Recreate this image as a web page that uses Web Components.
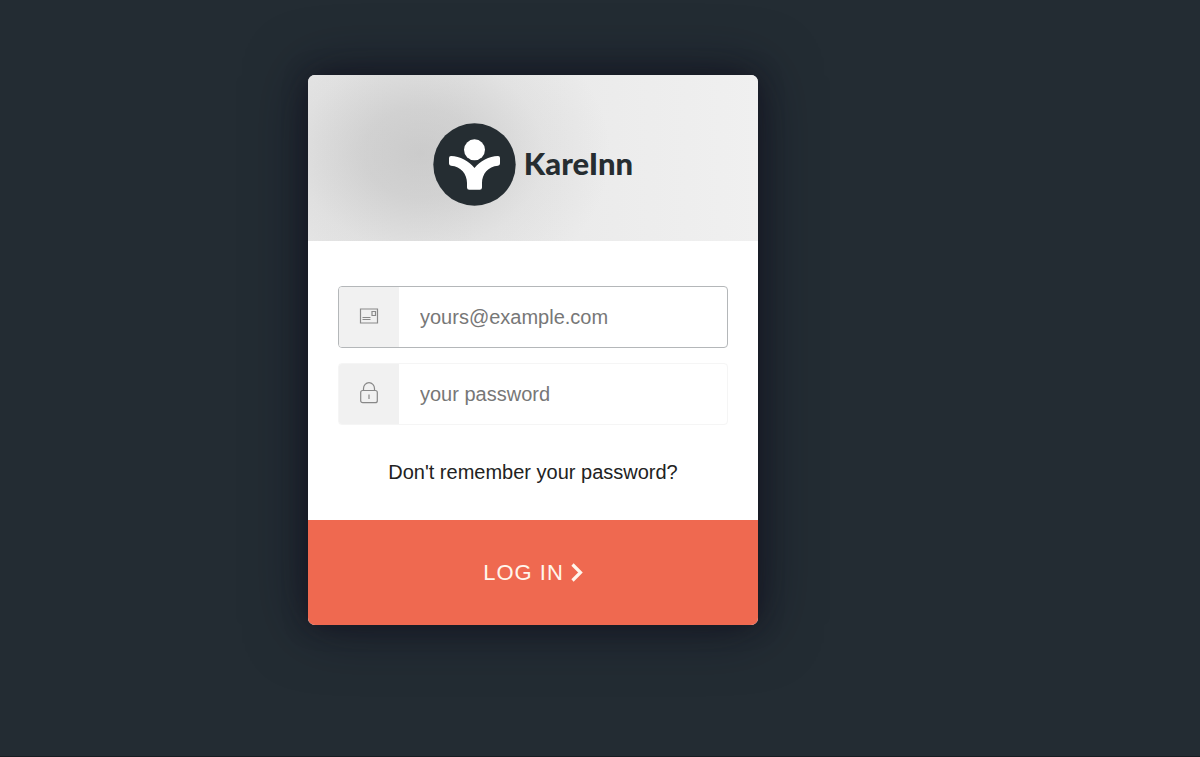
<!DOCTYPE html>
<html lang="en">
<head>
<meta charset="utf-8">
<meta name="viewport" content="width=device-width, initial-scale=1">
<title>KareInn – Log in</title>
<style>
  html { height: 100%; background: #232c33; }
  body { margin: 0; min-height: 100%; box-sizing: border-box; border-bottom: 1px solid #171d22; font-family: "Liberation Sans", Arial, sans-serif; font-size: 20px; color: #222; display: grid; }
</style>
</head>
<body>
<login-page>
  <login-card>
    <brand-header slot="header">KareInn</brand-header>
    <login-field type="email" name="email" placeholder="yours@example.com" label="Email" active>
      <svg width="20" height="16" viewBox="0 0 20 16" fill="none" stroke="#8a8a8a" stroke-width="1.2" aria-hidden="true"><path d="M1.500 1h17v14h-17zM13 3.500h3.500v4H13zM3.500 9.500h8M3.500 11.500h8"/></svg>
    </login-field>
    <login-field type="password" name="password" placeholder="your password" label="Password">
      <svg width="20" height="24" viewBox="0 0 20 24" fill="none" stroke="#888" stroke-width="1.2" aria-hidden="true"><rect x="1.700" y="9.500" width="16.600" height="12.200" rx="2"/><path d="M4.500 9.500V7.500a5.500 5.800 0 0 1 11 0v2M10 13.500v4.500"/></svg>
    </login-field>
    <forgot-link href="#reset">Don't remember your password?</forgot-link>
    <submit-button slot="footer">LOG IN</submit-button>
  </login-card>
</login-page>
<script>
const define = (name, html, setup) => customElements.define(name, class extends HTMLElement {
  constructor() {
    super();
    this.attachShadow({ mode: "open" }).innerHTML = html;
  }
  connectedCallback() { if (setup) setup(this, this.shadowRoot); }
});

define("login-page", `
  <style>
    :host { display: block; }
    main { display: flex; justify-content: center; padding: 75px 134px 75px 0; }
    @media (max-width: 700px) { main { padding: 0; } }
  </style>
  <main><slot></slot></main>`);

define("login-card", `
  <style>
    :host { display: block; width: 100%; max-width: 450px; }
    form { display: flex; flex-direction: column; border-radius: 7px; overflow: hidden; background: #fff; box-shadow: 0 0 60px rgba(10, 10, 25, .55), 0 0 24px rgba(20, 12, 25, .45); }
    .body { display: flex; flex-direction: column; gap: 15px; padding: 45px 30px 30px; }
  </style>
  <form>
    <slot name="header"></slot>
    <div class="body"><slot></slot></div>
    <slot name="footer"></slot>
  </form>`);

define("brand-header", `
  <style>
    :host { display: block; }
    header { display: flex; align-items: center; justify-content: center; gap: 8px; box-sizing: border-box; height: 166px; padding-top: 13px;
      background: radial-gradient(ellipse 190px 150px at 25% 47%, rgba(150,150,150,.36) 0%, rgba(155,155,155,.3) 30%, rgba(170,170,170,.13) 65%, transparent 100%), linear-gradient(90deg, #e8e8e8, #ebebeb 60%, #f0f0f0); }
    svg { flex: none; }
    h1 { margin: 0; padding-bottom: 3px; font: 900 31px/40px Lato, sans-serif; color: #262d31; }
  </style>
  <header>
    <svg width="83" height="83" viewBox="0 0 83 83" aria-hidden="true">
      <circle cx="41.500" cy="41.500" r="41.200" fill="#252d32"/>
      <circle cx="41.500" cy="26.800" r="10.500" fill="#fff"/>
      <path fill="#fff" d="M18 33C27 33 36 38 41.500 45C47 38 56 33 65 33Q67 33 67 35V40.500Q67 42.500 65 42.700C55 43.500 49 51 49 60V64.500Q49 66.700 46.800 66.700H36.200Q34 66.700 34 64.500V60C34 51 28 43.500 18 42.700Q16 42.500 16 40.500V35Q16 33 18 33Z"/>
    </svg>
    <h1><slot></slot></h1>
  </header>`);

define("login-field", `
  <style>
    :host { display: block; }
    label { display: flex; box-sizing: border-box; height: 62px; border: 1px solid #f5f5f5; border-radius: 4px; overflow: hidden; background: #fff; }
    :host([active]) label { border-color: #b4b7b9; }
    .icon { flex: none; width: 60px; display: grid; place-items: center; background: #f1f1f1; padding-bottom: 3px; box-sizing: border-box; }
    input { flex: 1; min-width: 0; border: 0; outline: 0; margin: 0; padding: 0 21px; background: none; font: inherit; color: #333; }
    input::placeholder { color: #777; opacity: 1; }
  </style>
  <label><span class="icon"><slot></slot></span><input></label>`,
  (host, root) => {
    const input = root.querySelector("input");
    for (const key of ["type", "name", "placeholder"]) input.setAttribute(key, host.getAttribute(key));
    input.setAttribute("aria-label", host.getAttribute("label"));
  });

define("forgot-link", `
  <style>
    :host { display: block; padding: 19px 0 5px; text-align: center; }
    a { display: block; color: #222; text-decoration: none; line-height: 26px; }
  </style>
  <a><slot></slot></a>`,
  (host, root) => root.querySelector("a").setAttribute("href", host.getAttribute("href")));

define("submit-button", `
  <style>
    :host { display: block; }
    button { display: flex; align-items: center; justify-content: center; gap: 7px; width: 100%; height: 105px; margin: 0; padding: 0; border: 0; background: #ef6950; color: #fff6ec; font: 22px/28px "Liberation Sans", Arial, sans-serif; letter-spacing: 1px; cursor: pointer; }
  </style>
  <button type="submit"><span><slot></slot></span>
    <svg width="12" height="20" viewBox="0 0 12 20" fill="none" stroke="currentColor" stroke-width="3.200" aria-hidden="true"><path d="M1.500 1.500L9.500 9.500L1.500 17.500"/></svg>
  </button>`);
</script>
</body>
</html>
